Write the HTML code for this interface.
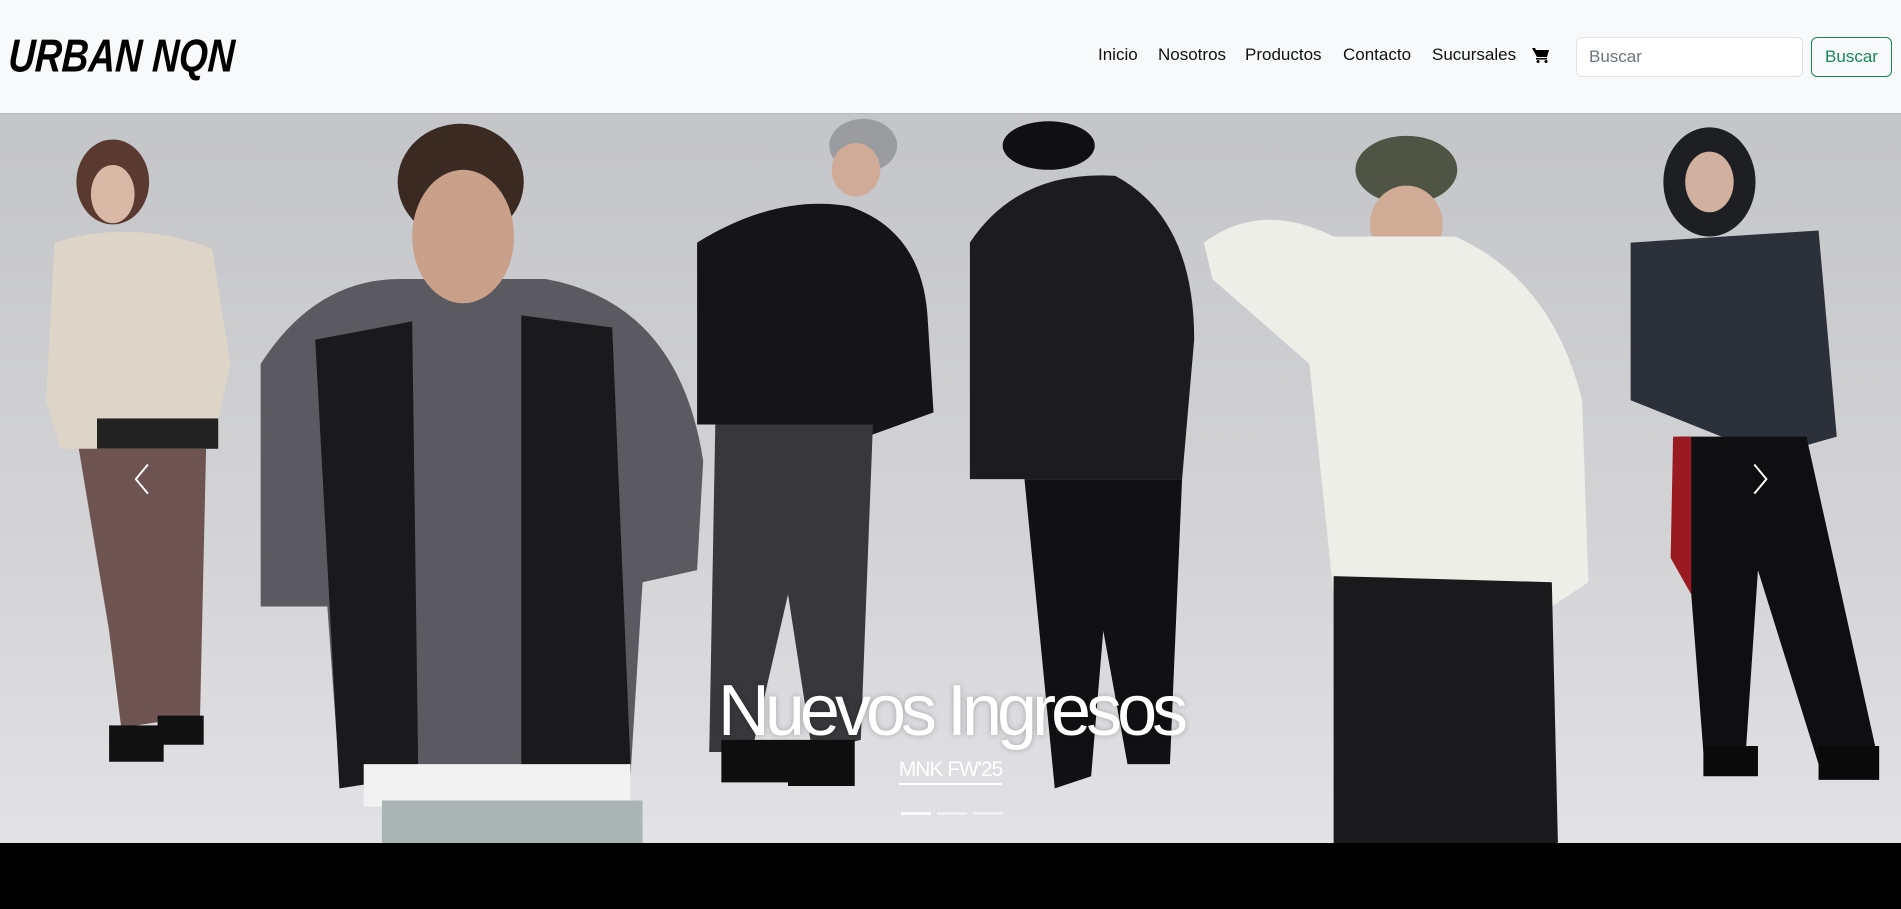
<!DOCTYPE html>
<html><head><meta charset="utf-8"><style>
*{margin:0;padding:0;box-sizing:border-box}
body{width:1901px;height:909px;overflow:hidden;background:#000;font-family:"Liberation Sans",sans-serif}
.nav{position:absolute;left:0;top:0;width:1901px;height:114px;background:#f8f9fa;border-bottom:1px solid #bbb}
.logo{position:absolute;left:10px;top:30px;font:italic 900 37px "Liberation Sans",sans-serif;letter-spacing:0px;transform:scaleY(1.25) skewX(-4deg);transform-origin:left top;color:#000}
.links{position:absolute;top:45px;font-size:17px;color:#111}
.links span{position:absolute;white-space:nowrap}
.search{position:absolute;left:1576px;top:37px;width:227px;height:40px;background:#fff;border:1px solid #dee2e6;border-radius:6px;font-size:17px;color:#6c757d;padding:9px 12px}
.btn{position:absolute;left:1811px;top:37px;width:81px;height:40px;border:1px solid #198754;border-radius:6px;color:#198754;font-size:17px;text-align:center;line-height:38px}
.hero{position:absolute;left:0;top:114px;width:1901px;height:729px;overflow:hidden}
.title{position:absolute;left:0;width:1901px;text-align:center;color:#fff;font-size:72px;letter-spacing:-5px;text-shadow:0 0 6px rgba(0,0,0,.25)}
.sub{position:absolute;left:0;width:1901px;text-align:center;color:#fff;font-size:21px;letter-spacing:-1px}
.sub span{border-bottom:2px solid #fff;padding-bottom:2px}
.ind{position:absolute;height:3px;width:30px;background:#fff;opacity:.5}
</style></head><body>
<div class="nav">
<div class="logo">URBAN NQN</div>
<div class="links">
<span style="left:1098px">Inicio</span>
<span style="left:1158px">Nosotros</span>
<span style="left:1245px">Productos</span>
<span style="left:1343px">Contacto</span>
<span style="left:1432px">Sucursales</span>
</div>
<svg style="position:absolute;left:1532px;top:47px" width="18" height="16" viewBox="0 0 18 16"><path d="M0 1h3l1 2h13l-2 7H5z" fill="#000"/><rect x="4" y="11" width="11" height="1.5" fill="#000"/><circle cx="6" cy="14.5" r="1.5"/><circle cx="14" cy="14.5" r="1.5"/></svg>
<div class="search">Buscar</div>
<div class="btn">Buscar</div>
</div>
<div class="hero">
<svg width="1901" height="729" viewBox="0 94 1568 601" preserveAspectRatio="none">
<defs><linearGradient id="bg" x1="0" y1="0" x2="0" y2="1"><stop offset="0" stop-color="#c4c5c8"/><stop offset=".6" stop-color="#d4d4d7"/><stop offset="1" stop-color="#e2e2e6"/></linearGradient></defs>
<rect x="0" y="94" width="1568" height="601" fill="url(#bg)"/>
<ellipse cx="93" cy="150" rx="30" ry="35" fill="#5a3a30"/>
<ellipse cx="93" cy="160" rx="18" ry="24" fill="#d9b8a5"/>
<path d="M45 200 Q110 180 175 205 L190 300 L175 370 L50 370 L38 330Z" fill="#ddd6c8"/>
<rect x="80" y="345" width="100" height="25" fill="#222"/>
<path d="M65 370 L170 370 L165 590 L100 600 L90 520Z" fill="#6e5450"/>
<path d="M90 598 h45 v30 h-45z M130 590 h38 v24 h-38z" fill="#111"/>
<path d="M215 300 Q260 230 330 230 L450 230 Q560 250 580 380 L575 470 L530 480 L520 640 L280 640 L270 500 L215 500Z" fill="#5a5a60"/>
<path d="M260 280 L340 265 L345 640 L280 650Z M430 260 L505 270 L520 630 L430 640Z" fill="#1a1a1c"/>
<path d="M300 630 h220 v35 h-220z" fill="#f2f2f2"/>
<path d="M315 660 h215 v35 h-215z" fill="#aab4b4"/>
<ellipse cx="380" cy="150" rx="52" ry="48" fill="#3a2a22"/>
<ellipse cx="382" cy="195" rx="42" ry="55" fill="#c9a089"/>
<ellipse cx="712" cy="120" rx="28" ry="22" fill="#9a9ca0"/>
<ellipse cx="706" cy="140" rx="20" ry="22" fill="#d0ac98"/>
<path d="M575 200 Q640 160 700 170 Q760 190 765 260 L770 340 L715 360 L640 350 L575 350Z" fill="#151517"/>
<path d="M590 350 L720 350 L710 610 L670 620 L650 490 L620 620 L585 620Z" fill="#38383c"/>
<path d="M595 610 h60 v35 h-60z M650 610 h55 v38 h-55z" fill="#0e0e0e"/>
<ellipse cx="865" cy="120" rx="38" ry="20" fill="#101012"/>
<path d="M800 200 Q840 140 920 145 Q985 180 985 280 L975 395 L800 395Z" fill="#1c1c1e"/>
<path d="M845 395 L975 395 L965 630 L930 630 L910 520 L900 640 L870 650Z" fill="#111113"/>
<ellipse cx="1160" cy="140" rx="42" ry="28" fill="#4f5444"/>
<ellipse cx="1160" cy="185" rx="30" ry="32" fill="#d0ab96"/>
<path d="M993 200 Q1040 165 1100 195 L1200 195 Q1280 230 1305 330 L1310 480 L1280 500 L1100 490 L1080 300 L1000 230Z" fill="#eeeee8"/>
<path d="M1100 475 L1280 480 L1285 695 L1100 695Z" fill="#1a1a1c"/>
<ellipse cx="1410" cy="150" rx="38" ry="45" fill="#1e1f23"/>
<ellipse cx="1410" cy="150" rx="20" ry="25" fill="#d2b0a0"/>
<path d="M1345 200 L1500 190 L1515 360 L1480 370 L1420 360 L1345 330Z" fill="#2c3038"/>
<path d="M1385 360 L1490 360 L1550 630 L1500 630 L1450 470 L1440 620 L1405 620Z" fill="#0f0f11"/>
<path d="M1380 360 L1395 360 L1395 490 L1378 460Z" fill="#9a1a22"/>
<path d="M1405 615 h45 v25 h-45z M1500 615 h50 v28 h-50z" fill="#0a0a0a"/>
<polyline points="122,383 112,395 122,407" fill="none" stroke="#fff" stroke-width="1.6"/>
<polyline points="1447,383 1457,395 1447,407" fill="none" stroke="#fff" stroke-width="1.6"/>
</svg>
<div class="title" style="top:556px">Nuevos Ingresos</div>
<div class="sub" style="top:644px"><span>MNK FW'25</span></div>
<div class="ind" style="left:901px;top:698px;opacity:1"></div>
<div class="ind" style="left:937px;top:698px"></div>
<div class="ind" style="left:973px;top:698px"></div>
</div>
</body></html>
